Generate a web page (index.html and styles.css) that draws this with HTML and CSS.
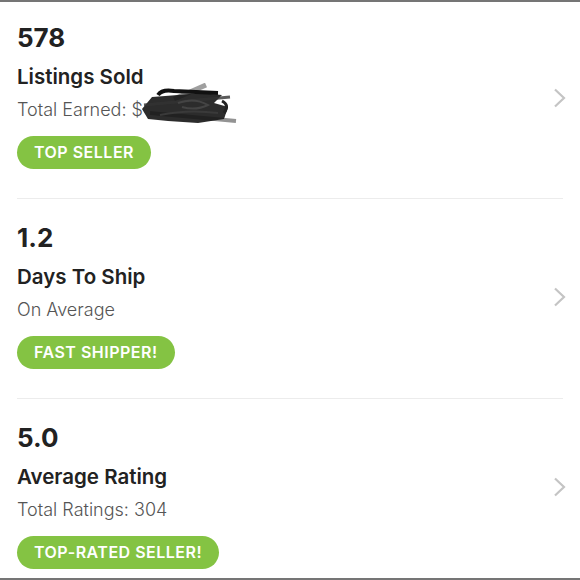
FILE: index.html
```html
<!DOCTYPE html>
<html>
<head>
<meta charset="utf-8">
<link rel="stylesheet" href="styles.css">
</head>
<body>
<div class="page">
  <div class="row first">
    <div class="info">
      <div class="num">578</div>
      <div class="title">Listings Sold</div>
      <div class="sub">Total Earned: $<span class="redact"><svg width="100" height="44" viewBox="0 0 100 44"><path d="M36 16 L68 2" stroke="#777" stroke-width="5" opacity="0.7"/><path d="M12 30 L98 38" stroke="#666" stroke-width="4" opacity="0.7"/><path d="M14 14 L40 12 L62 10 L84 12 L76 20 L90 24 L86 36 L60 40 L30 38 L10 36 L4 26 Z" fill="#151515" opacity="0.9"/><path d="M20 12 Q24 6 36 8 L80 10" stroke="#111" stroke-width="4" fill="none"/><path d="M6 22 L92 14" stroke="#333" stroke-width="3" opacity="0.8"/><path d="M40 20 Q56 14 70 22 Q58 28 44 24" stroke="#444" stroke-width="2" fill="none"/><path d="M22 32 Q50 26 80 30" stroke="#3a3a3a" stroke-width="2" fill="none"/><path d="M84 18 Q92 22 86 30" stroke="#222" stroke-width="3" fill="none"/></svg></span></div>
      <div class="badge">TOP SELLER</div>
    </div>
    <svg class="chev" width="14" height="20" viewBox="0 0 14 20"><path d="M2 1.5 L11 10 L2 18.5" stroke="#c4c4c4" stroke-width="2.2" fill="none"/></svg>
  </div>
  <div class="row">
    <div class="info">
      <div class="num">1.2</div>
      <div class="title">Days To Ship</div>
      <div class="sub">On Average</div>
      <div class="badge">FAST SHIPPER!</div>
    </div>
    <svg class="chev" width="14" height="20" viewBox="0 0 14 20"><path d="M2 1.5 L11 10 L2 18.5" stroke="#c4c4c4" stroke-width="2.2" fill="none"/></svg>
  </div>
  <div class="row last">
    <div class="info">
      <div class="num">5.0</div>
      <div class="title">Average Rating</div>
      <div class="sub">Total Ratings: 304</div>
      <div class="badge">TOP-RATED SELLER!</div>
    </div>
    <svg class="chev" width="14" height="20" viewBox="0 0 14 20"><path d="M2 1.5 L11 10 L2 18.5" stroke="#c4c4c4" stroke-width="2.2" fill="none"/></svg>
  </div>
</div>
</body>
</html>
```
FILE: styles.css
```css
html, body {
  margin: 0;
  padding: 0;
  background: #fff;
}
.page {
  width: 580px;
  height: 580px;
  box-sizing: border-box;
  border-top: 2px solid #757575;
  border-bottom: 2px solid #757575;
  font-family: Inter, "Liberation Sans", sans-serif;
  display: flex;
  flex-direction: column;
}
.row {
  height: 200px;
  flex: none;
  margin: 0 17px;
  border-bottom: 1px solid #ececec;
  display: flex;
  align-items: center;
  justify-content: space-between;
  box-sizing: border-box;
}
.row.first {
  height: 197px;
}
.row.last {
  border-bottom: none;
  flex: 1;
}
.info {
  align-self: stretch;
  padding-top: 23px;
  display: flex;
  flex-direction: column;
  align-items: flex-start;
}
.row.first .info {
  padding-top: 20px;
}
.num {
  font-size: 26px;
  font-weight: 700;
  color: #222;
  line-height: 31px;
}
.title {
  font-size: 20.5px;
  font-weight: 600;
  color: #222;
  line-height: 24px;
  margin-top: 11.5px;
}
.sub {
  font-size: 18px;
  font-weight: 300;
  color: #555;
  line-height: 22px;
  margin-top: 10.5px;
  position: relative;
}
.redact {
  position: absolute;
  left: 121px;
  top: -16px;
}
.badge {
  margin-top: 15px;
  background: #84c343;
  color: #fff;
  font-weight: 600;
  font-size: 16px;
  letter-spacing: 0.5px;
  height: 33px;
  line-height: 33px;
  padding: 0 17px;
  border-radius: 16.5px;
}
.chev {
  margin-right: -4px;
  margin-top: -4px;
}
```
